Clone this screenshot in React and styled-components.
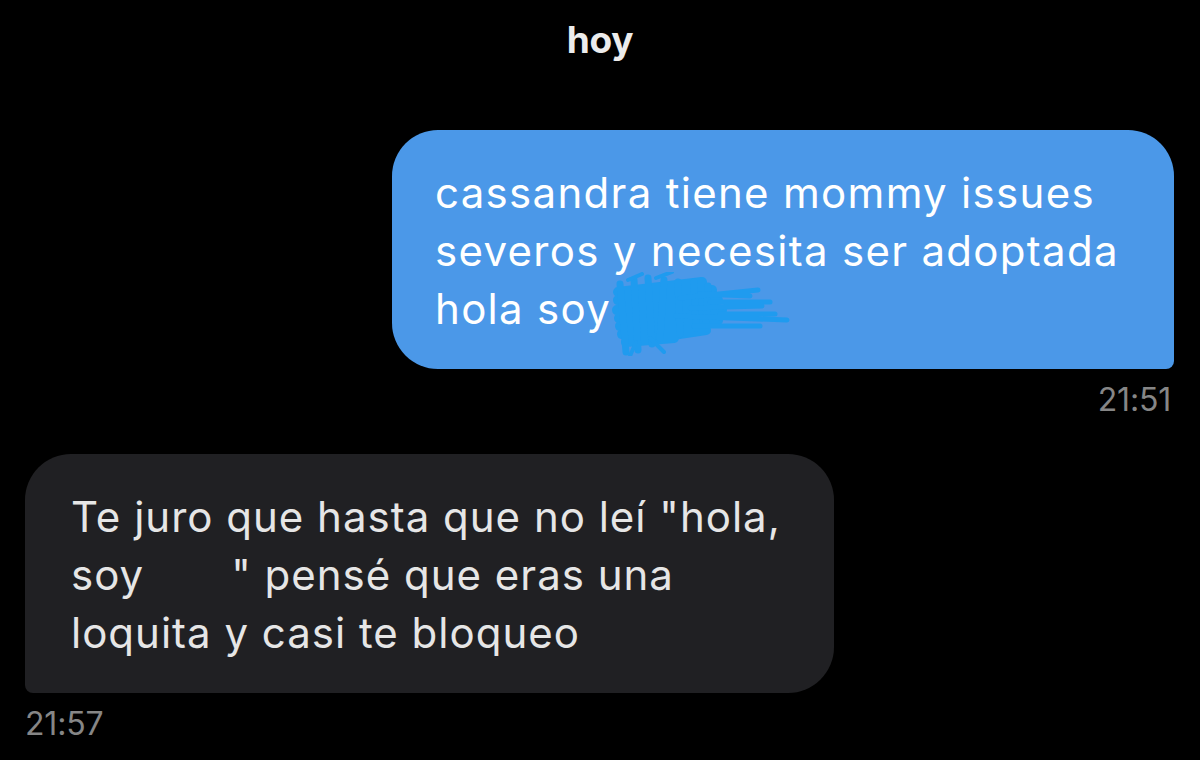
import React from "react";
import styled, { createGlobalStyle } from "styled-components";

const GlobalStyle = createGlobalStyle`
  html, body {
    margin: 0;
    padding: 0;
    background: #000;
  }
  body {
    font-family: Inter, "Noto Sans", "Liberation Sans", sans-serif;
    -webkit-font-smoothing: antialiased;
  }
`;

const Page = styled.div`
  width: 1200px;
  height: 760px;
  box-sizing: border-box;
  background: #000;
  display: flex;
  flex-direction: column;
  padding: 18px 26px 0 25px;
  overflow: hidden;
`;

const DateLabel = styled.div`
  align-self: center;
  color: #ececec;
  font-size: 37px;
  line-height: 44px;
  font-weight: 700;
  letter-spacing: -0.3px;
  margin-left: 1px;
`;

const Row = styled.div`
  display: flex;
  justify-content: ${(p) => (p.$mine ? "flex-end" : "flex-start")};
  margin-top: ${(p) => p.$gap}px;
`;

const Bubble = styled.div`
  position: relative;
  box-sizing: border-box;
  width: ${(p) => p.$width}px;
  padding: 34px 20px 31px ${(p) => (p.$mine ? 43 : 46)}px;
  background: ${(p) => (p.$mine ? "#4b98e8" : "#202023")};
  color: ${(p) => (p.$mine ? "#ffffff" : "#e6e6e6")};
  border-radius: ${(p) => (p.$mine ? "46px 46px 8px 46px" : "46px 46px 46px 8px")};
  font-size: 42px;
  line-height: 58px;
  letter-spacing: ${(p) => (p.$mine ? 1.3 : 1.0)}px;
  white-space: nowrap;
`;

const Line = styled.div``;

const Blank = styled.span`
  display: inline-block;
  width: ${(p) => p.$w}px;
`;

const Scribble = styled.svg`
  position: absolute;
  left: 218px;
  top: 142px;
  width: 184px;
  height: 84px;
  pointer-events: none;
`;

const Time = styled.div`
  color: #868686;
  font-size: 32px;
  line-height: 38px;
  letter-spacing: -0.2px;
  margin-top: ${(p) => p.$gap}px;
  align-self: ${(p) => (p.$mine ? "flex-end" : "flex-start")};
  padding-right: ${(p) => (p.$mine ? 3 : 0)}px;
`;

function ScribbleMark() {
  return (
    <Scribble viewBox="0 0 184 84">
      <g
        fill="none"
        stroke="#1f9bef"
        strokeLinecap="round"
        strokeLinejoin="round"
      >
        <path
          strokeWidth="10"
          d="M8 20 L92 10 L8 28 L102 18 L7 38 L108 28 L9 46 L112 38 L10 54 L108 48 L12 62 L96 58 L16 70 L64 66"
        />
        <path
          strokeWidth="7"
          d="M10 12 L16 80 M24 8 L28 78 M38 6 L42 72 M54 8 L50 66 M68 10 L70 62 M84 10 L86 56 M98 14 L96 50"
        />
        <path
          strokeWidth="5"
          d="M70 26 L148 18 M80 36 L152 34 M66 44 L177 48 M100 30 L160 30 M84 54 L150 54 M110 42 L165 42 M90 22 L140 24"
        />
        <path
          strokeWidth="4"
          d="M26 70 L20 84 M40 66 L54 80 M18 8 L32 2 M46 6 L62 0"
        />
      </g>
    </Scribble>
  );
}

export default function App() {
  return (
    <>
      <GlobalStyle />
      <Page>
        <DateLabel>hoy</DateLabel>

        <Row $mine $gap={68}>
          <Bubble $mine $width={782}>
            <Line>cassandra tiene mommy issues</Line>
            <Line>severos y necesita ser adoptada</Line>
            <Line>hola soy</Line>
            <ScribbleMark />
          </Bubble>
        </Row>
        <Time $mine $gap={12}>21:51</Time>

        <Row $gap={35}>
          <Bubble $width={809}>
            <Line>Te juro que hasta que no leí "hola,</Line>
            <Line>
              soy<Blank $w={87} />" pensé que eras una
            </Line>
            <Line>loquita y casi te bloqueo</Line>
          </Bubble>
        </Row>
        <Time $gap={12}>21:57</Time>
      </Page>
    </>
  );
}
